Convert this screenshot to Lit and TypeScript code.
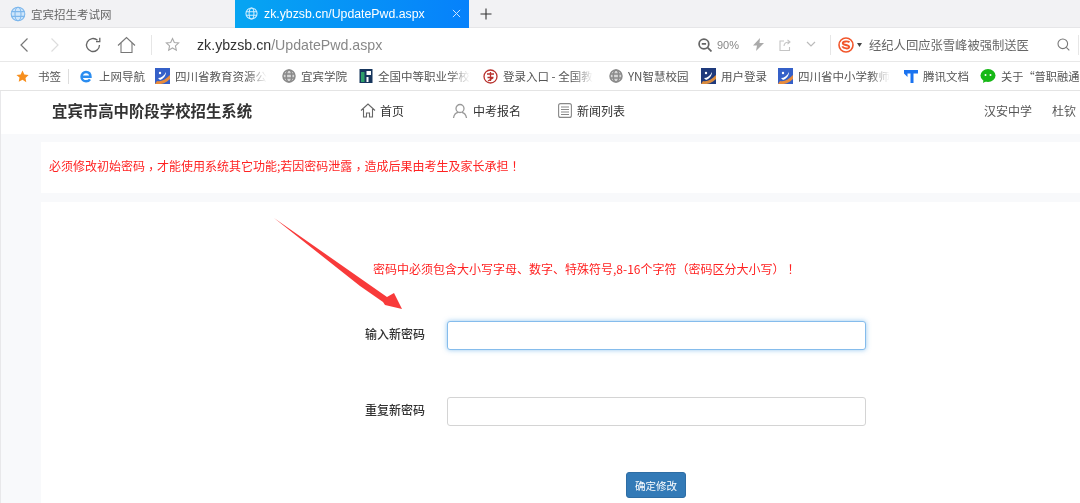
import { LitElement, html, css } from "lit";
import { customElement } from "lit/decorators.js";

const globe = (c = "#8a8a8a", s = 14) => html`<svg class="ic" width=${s} height=${s} viewBox="0 0 14 14" fill="none" stroke=${c} stroke-width="1.5"><circle cx="7" cy="7" r="6" fill=${c} fill-opacity=".35"/><ellipse cx="7" cy="7" rx="2.7" ry="6"/><path d="M1 5h12M1 9h12"/></svg>`;
const blueLogo = html`<svg class="ic" width="15" height="16" viewBox="0 0 15 16"><rect width="15" height="16" fill="#3560c8"/><path d="M0 16l2-3c4 1 8-1 13-6v4c-4 4-8 5-10 5z" fill="#e98b3a"/><path d="M3 10c3 0 6-2 8-6 0 4-3 7-6 8z" fill="#fff"/><circle cx="5" cy="5" r="1.2" fill="#fff"/></svg>`;
const navyLogo = html`<svg class="ic" width="15" height="16" viewBox="0 0 15 16"><rect width="15" height="16" fill="#1f3a7c"/><path d="M0 16l2-3c4 1 8-1 13-6v4c-4 4-8 5-10 5z" fill="#d98a3c"/><path d="M3 10c3 0 6-2 8-6 0 4-3 7-6 8z" fill="#fff"/><circle cx="5" cy="5" r="1.2" fill="#fff"/></svg>`;

@customElement("app-root")
export class AppRoot extends LitElement {
  static styles = css`
    :host { display: block; width: 1080px; height: 503px; overflow: hidden; position: relative; background: #f8f9fb;
      font-family: "Noto Sans CJK SC", "Noto Sans", sans-serif; color: #333; filter: blur(0.3px); }
    .ic { flex: none; display: block; }
    .tabs { height: 28px; background: #f2f2f4; display: flex; align-items: center; border-bottom: 1px solid #e6e6e8; box-sizing: border-box; }
    .tab { height: 28px; box-sizing: border-box; display: flex; align-items: center; }
    .tab1 { width: 235px; padding-left: 10px; gap: 5px; color: #666; font-size: 11.5px; }
    .tab2 { width: 234px; padding-left: 10px; gap: 6px; color: #fff; background: linear-gradient(90deg, #06a5f2, #0681fb);
      font-family: "Liberation Sans", sans-serif; font-size: 12.3px; }
    .tab2 .x { margin-left: auto; margin-right: 8px; }
    .plus { margin-left: 11px; }
    .tool { height: 34px; background: #fff; display: flex; align-items: center; border-bottom: 1px solid #e8e8e8; box-sizing: border-box; }
    .tool svg { flex: none; }
    .url { font-family: "Liberation Sans", sans-serif; font-size: 14.2px; color: #888; margin-left: 17px; width: 488px; }
    .url b { font-weight: 400; color: #333; }
    .vsep { width: 1px; height: 20px; background: #e6e6e6; }
    .zoomv { font-family: "Liberation Sans", sans-serif; font-size: 11px; color: #888; margin-left: 5px; width: 20px; }
    .news { font-size: 12.3px; color: #666; margin-left: 7px; white-space: nowrap; width: 160px; }
    .marks { height: 29px; background: #fff; display: flex; align-items: center; border-bottom: 1px solid #e4e4e4; box-sizing: border-box; font-size: 11.5px; color: #555; white-space: nowrap; overflow: hidden; }
    .m { display: flex; align-items: center; gap: 5px; flex: none; }
    .last { font-size: 11.2px; }
    .fade { -webkit-mask-image: linear-gradient(90deg, #000 78%, transparent); mask-image: linear-gradient(90deg, #000 78%, transparent); display: block; }
    .page { position: relative; }
    .head { height: 43px; background: #fff; display: flex; align-items: center; white-space: nowrap; border-left: 1px solid #e8e8ea; padding-bottom: 4px; box-sizing: border-box; }
    .brand { font-size: 15.4px; font-weight: 700; color: #333; margin-left: 51px; width: 308px; line-height: 1; }
    .nav { display: flex; align-items: center; gap: 5px; font-size: 12px; color: #333; }
    .right { font-size: 12px; color: #555; }
    .body { border-left: 1px solid #e8e8ea; padding: 8px 0 0 40px; display: flex; flex-direction: column; gap: 9px; }
    .c1 { background: #fff; height: 51px; display: flex; align-items: center; padding-left: 8px; font-size: 12px; line-height: 16px; color: #f22; white-space: nowrap; padding-bottom: 3px; box-sizing: border-box; }
    .c2 { background: #fff; height: 320px; position: relative; display: flex; flex-direction: column; }
    .hint { margin: 59px 0 0 332px; font-size: 12px; line-height: 16px; color: #f22; white-space: nowrap; }
    .pn { font-family: "Noto Sans CJK TC", sans-serif; }
    .cm { font-family: "Noto Sans CJK TC", sans-serif; vertical-align: -3px; line-height: 1; }
    .row { display: flex; align-items: center; height: 29px; }
    .row label { width: 82px; margin-left: 324px; font-size: 12px; font-weight: 500; color: #333; line-height: 1; padding-bottom: 3px; }
    .inp { width: 419px; height: 29px; box-sizing: border-box; border: 1px solid #d4d4d4; border-radius: 3px; background: #fff; }
    .focus { border-color: #85bcec; box-shadow: 0 0 5px rgba(102,175,233,.7); }
    .r1 { margin-top: 44px; }
    .r2 { margin-top: 47px; }
    .btn { margin: 46px 0 0 585px; width: 60px; height: 26px; background: #337ab7; border: 1px solid #2e6da4; border-radius: 3px; color: #fff; font-size: 10.5px; font-family: inherit; padding: 0; box-sizing: border-box; }
    .arrow { position: absolute; left: 270px; top: 125px; }
  `;

  render() {
    return html`
      <div class="tabs">
        <div class="tab tab1"><svg class="ic" width="16" height="16" viewBox="0 0 16 16" fill="#cfe6fb" stroke="#7db7ec" stroke-width="1.1"><circle cx="8" cy="8" r="6.8"/><ellipse cx="8" cy="8" rx="3" ry="6.8" fill="none"/><path d="M1.5 5.6h13M1.5 10.4h13" fill="none"/></svg><span>宜宾招生考试网</span></div>
        <div class="tab tab2"><svg class="ic" width="13" height="13" viewBox="0 0 14 14" fill="none" stroke="#cfeeff" stroke-width="1.1"><circle cx="7" cy="7" r="6"/><ellipse cx="7" cy="7" rx="2.6" ry="6"/><path d="M1 5h12M1 9h12"/></svg><span>zk.ybzsb.cn/UpdatePwd.aspx</span>
          <svg class="x" width="9" height="9" viewBox="0 0 10 10" stroke="#cfe6ff" stroke-width="1.1"><path d="M1 1l8 8M9 1l-8 8"/></svg></div>
        <svg class="plus" width="12" height="12" viewBox="0 0 12 12" stroke="#333" stroke-width="1.1"><path d="M6 .5v11M.5 6h11"/></svg>
      </div>

      <div class="tool">
        <svg style="margin-left:19px" width="10" height="16" viewBox="0 0 10 16" fill="none" stroke="#777" stroke-width="1.2"><path d="M8.500 1.500L2 8l6.500 6.500"/></svg>
        <svg style="margin-left:21px" width="10" height="16" viewBox="0 0 10 16" fill="none" stroke="#ddd" stroke-width="1.2"><path d="M1.500 1.500L8 8l-6.500 6.500"/></svg>
        <svg style="margin-left:24px" width="18" height="18" viewBox="0 0 18 18" fill="none" stroke="#666" stroke-width="1.3"><path d="M15.5 9a6.5 6.5 0 1 1-2-4.7"/><path d="M15.8 1.8v3.8H12" stroke-width="1.3"/></svg>
        <svg style="margin-left:15px" width="19" height="18" viewBox="0 0 19 18" fill="none" stroke="#777" stroke-width="1.1"><path d="M1 9.500l8.500-8L18 9.500"/><path d="M4 7v9.500h11V7"/></svg>
        <div class="vsep" style="margin-left:15px"></div>
        <svg style="margin-left:13px" width="15" height="15" viewBox="0 0 24 24" fill="none" stroke="#aaa" stroke-width="1.8"><path d="M12 2.500l2.900 6.300 6.900.8-5.100 4.600 1.400 6.800-6.100-3.500-6.100 3.500 1.400-6.800L2.200 9.600l6.900-.8z"/></svg>
        <span class="url"><b>zk.ybzsb.cn</b>/UpdatePwd.aspx</span>
        <svg style="margin-left:13px" width="14" height="14" viewBox="0 0 13 13" fill="none" stroke="#666" stroke-width="1.6"><circle cx="5.500" cy="5.500" r="4.500"/><path d="M9 9l3.500 3.500M3.500 5.500h4"/></svg>
        <span class="zoomv">90%</span>
        <svg style="margin-left:16px" width="11" height="13" viewBox="0 0 11 13" fill="#aaa"><path d="M7 0L0 7.500h4L3 13l8-8H6.500z"/></svg>
        <svg style="margin-left:15px" width="12" height="12" viewBox="0 0 12 12" fill="none" stroke="#c4c4c4" stroke-width="1.1"><path d="M5 2H1v9.500h9.500V8M5 7c0-3 2-4 6-4M8.500 .8L11 3 8.500 5.200"/></svg>
        <svg style="margin-left:15px" width="10" height="7" viewBox="0 0 10 7" fill="none" stroke="#bbb" stroke-width="1.2"><path d="M1 1l4 4 4-4"/></svg>
        <div class="vsep" style="margin-left:14px"></div>
        <svg style="margin-left:7px" width="16" height="16" viewBox="0 0 16 16"><circle cx="8" cy="8" r="7" fill="#fff" stroke="#f2562b" stroke-width="1.6"/><path d="M11.500 5.300C10 4 5 4 4.800 6.200 4.700 8.400 11.300 7.600 11.200 10c-.2 2-5.500 2-7-.6" fill="none" stroke="#f2562b" stroke-width="1.900"/></svg>
        <svg style="margin-left:3px" width="5" height="4" viewBox="0 0 5 4" fill="#444"><path d="M0 0h5L2.500 4z"/></svg>
        <span class="news">经纪人回应张雪峰被强制送医</span>
        <svg style="margin-left:28px" width="13" height="13" viewBox="0 0 13 13" fill="none" stroke="#777" stroke-width="1.1"><circle cx="5.800" cy="5.800" r="4.800"/><path d="M9.300 9.300l3 3"/></svg>
        <div class="vsep" style="margin-left:8px"></div>
      </div>

      <div class="marks">
        <svg style="margin-left:16px" class="ic" width="13" height="13" viewBox="0 0 24 24" fill="#f78f1e"><path d="M12 1l3.400 7.300 7.900 1-5.800 5.400 1.500 7.900L12 17.800l-7 3.800 1.500-7.900L.7 9.300l7.900-1z"/></svg>
        <span style="margin-left:9px">书签</span>
        <div style="width:1px;height:15px;background:#ddd;margin:0 11px 0 7px"></div>
        <div class="m" style="width:75px;gap:7px"><svg class="ic" width="12" height="13" viewBox="0 0 12 13" fill="none"><path d="M2 6.800h8.500C10.500 3.500 8.500 2 6 2 3.500 2 1.500 4 1.500 6.700c0 3 2.200 4.600 4.500 4.600 1.700 0 3.200-.7 4-2" stroke="#2b8df0" stroke-width="2.400"/></svg><span>上网导航</span></div>
        <div class="m" style="width:127px">${blueLogo}<span class="fade">四川省教育资源公</span></div>
        <div class="m" style="width:77px">${globe()}<span>宜宾学院</span></div>
        <div class="m" style="width:124px"><svg class="ic" width="14" height="14" viewBox="0 0 13 14"><rect width="13" height="14" fill="#17365d"/><rect x="1.500" y="3" width="3.500" height="10" fill="#2ea06a"/><rect x="7" y="2" width="4.500" height="4" fill="#fff"/><rect x="7" y="8" width="2" height="5" fill="#fff"/></svg><span class="fade">全国中等职业学校</span></div>
        <div class="m" style="width:126px"><svg class="ic" width="15" height="15" viewBox="0 0 15 15" fill="none" stroke="#b8322e" stroke-width="1.300"><circle cx="7.500" cy="7.500" r="6.500"/><path d="M4 5h7M7.500 3v9M4.500 8.500h6M5 12l5-3"/></svg><span class="fade">登录入口 - 全国教</span></div>
        <div class="m" style="width:92px">${globe()}<span>YN智慧校园</span></div>
        <div class="m" style="width:77px">${navyLogo}<span>用户登录</span></div>
        <div class="m" style="width:126px">${blueLogo}<span class="fade">四川省中小学教师</span></div>
        <div class="m" style="width:76px"><svg class="ic" width="14" height="14" viewBox="0 0 14 14"><path d="M0 1h14v3.500H9.500V14H6.500V4.500H3.500V8L0 4.500z" fill="#1a73f0"/></svg><span>腾讯文档</span></div>
        <div class="m last"><svg class="ic" width="16" height="14" viewBox="0 0 15 14"><ellipse cx="7.500" cy="6.500" rx="7.500" ry="6.500" fill="#16b816"/><path d="M3 11l-.5 3 3.500-2z" fill="#16b816"/><circle cx="5" cy="6" r="1" fill="#fff"/><circle cx="10" cy="6" r="1" fill="#fff"/></svg><span>关于“普职融通</span></div>
      </div>

      <div class="page">
        <div class="head">
          <span class="brand">宜宾市高中阶段学校招生系统</span>
          <div class="nav" style="width:92px;gap:4px"><svg class="ic" width="16" height="15" viewBox="0 0 16 15" fill="none" stroke="#666" stroke-width="1.100"><path d="M1 7.500L8 1l7 6.500M3.500 6v8h3v-4h3v4h3V6"/></svg><span>首页</span></div>
          <div class="nav" style="width:106px"><svg class="ic" width="16" height="16" viewBox="0 0 16 16" fill="none" stroke="#999" stroke-width="1.300"><circle cx="8" cy="5.500" r="4"/><path d="M1.500 15c.5-3.500 3-5.500 5-5.700M14.500 15c-.5-3.500-2.500-5.200-4.500-5.700"/></svg><span>中考报名</span></div>
          <div class="nav" style="width:426px"><svg class="ic" width="14" height="15" viewBox="0 0 14 15" fill="none" stroke="#888" stroke-width="1.100"><rect x=".6" y=".6" width="12.800" height="13.800" rx="2"/><path d="M3 4h8M3 6.500h8M3 9h8M3 11.500h8"/></svg><span>新闻列表</span></div>
          <span class="right" style="width:68px">汉安中学</span>
          <span class="right">杜钦</span>
        </div>
        <div class="body">
          <div class="c1"><div>必须修改初始密码<span class="cm">，</span>才能使用系统其它功能;若因密码泄露<span class="cm">，</span>造成后果由考生及家长承担<span class="pn">！</span></div></div>
          <div class="c2">
            <div class="hint">密码中必须包含大小写字母、数字、特殊符号,8-16个字符<span class="pn">（</span>密码区分大小写<span class="pn">）！</span></div>
            <div class="row r1"><label>输入新密码</label><div class="inp focus"></div></div>
            <div class="row r2"><label>重复新密码</label><div class="inp"></div></div>
            <button class="btn">确定修改</button>
          </div>
        </div>
        <svg class="arrow" width="135" height="95" viewBox="0 0 135 95"><path d="M4 2L117 81 124 77 132 93 115 89 113 86 90 70z" fill="#f83a3a"/></svg>
      </div>
    `;
  }
}
